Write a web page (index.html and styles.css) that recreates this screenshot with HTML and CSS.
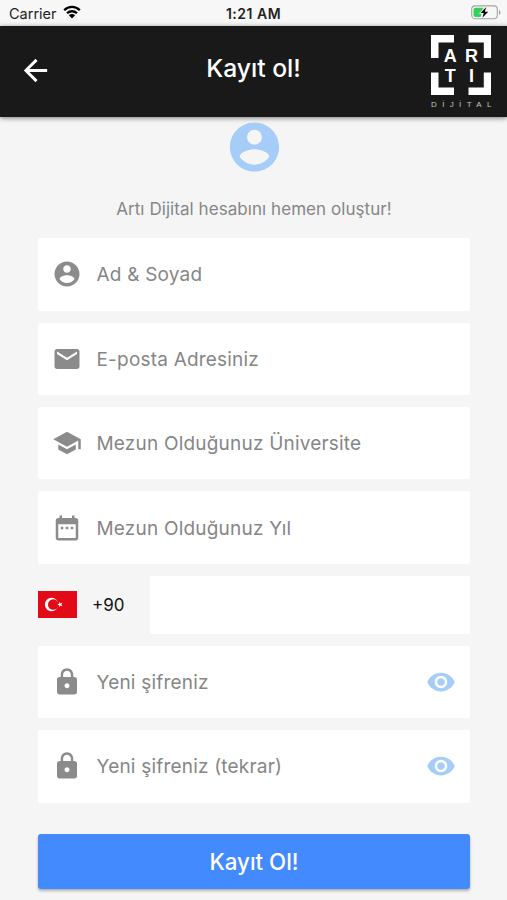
FILE: index.html
```html
<!DOCTYPE html>
<html lang="tr">
<head>
    <meta charset="UTF-8">
    <meta name="viewport" content="width=device-width, initial-scale=1.0">
    <title>Kayıt ol!</title>
    <link rel="stylesheet" href="styles.css">
</head>
<body>
    <div class="status-bar">
        <div class="carrier">
            <span>Carrier</span>
            <svg class="wifi" viewBox="0 0 18 14">
                <path d="M1.2 5.2a11 11 0 0 1 15.6 0M4 8.3a7.1 7.1 0 0 1 10 0" fill="none" stroke="#000" stroke-width="2.3"/>
                <path d="M5.8 10.3a4.6 4.6 0 0 1 6.4 0L9 13.6z"/>
            </svg>
        </div>
        <div class="time">1:21 AM</div>
        <svg class="battery" viewBox="0 0 30 15">
            <rect x="0.7" y="0.9" width="25.6" height="12.8" rx="3.4" fill="#f7f7f7" stroke="#a3a3a3" stroke-width="1.1"/>
            <path d="M4.5 2.7h8.3L9.2 8.3h1.6l-1.2 3.8H4.5a2 2 0 0 1-2-2V4.7a2 2 0 0 1 2-2z" fill="#35d05c"/>
            <path d="M28 5v4.8c2-.8 2-4 0-4.8z" fill="#a3a3a3"/>
            <path d="M15.2 2 9.6 8h3.2l-1.4 4.8L17.2 6.7h-3.4z" stroke="#f7f7f7" stroke-width="1.6" paint-order="stroke"/>
        </svg>
    </div>

    <header class="header">
        <a class="back" href="#" aria-label="Geri">
            <svg viewBox="0 0 24 24"><path d="M20 11H7.83l5.59-5.59L12 4l-8 8 8 8 1.41-1.41L7.83 13H20v-2z"/></svg>
        </a>
        <h1>Kayıt ol!</h1>
        <svg class="logo" viewBox="0 0 62 74">
            <path d="M0 0h23v7.5H7.5V23H0zM37.5 0H60v23h-7.2V7.5H37.5zM0 37.5h7.5v15H23V60H0zM52.8 37.5H60V60H37.5v-7.5h15.3z"/>
            <text class="logo-letter" x="19.2" y="27">A</text>
            <text class="logo-letter" x="40.6" y="27">R</text>
            <text class="logo-letter" x="19.2" y="46.5">T</text>
            <text class="logo-letter" x="40.6" y="46.5">I</text>
            <text class="logo-name" x="0" y="71.5" textLength="60.5">DİJİTAL</text>
        </svg>
    </header>

    <main class="container">
        <svg class="avatar" viewBox="0 0 24 24"><path d="M12 2C6.48 2 2 6.48 2 12s4.48 10 10 10 10-4.48 10-10S17.52 2 12 2zm0 3c1.66 0 3 1.34 3 3s-1.34 3-3 3-3-1.34-3-3 1.34-3 3-3zm0 14.2c-2.5 0-4.71-1.28-6-3.22.03-1.99 4-3.08 6-3.08 1.99 0 5.97 1.09 6 3.08-1.29 1.94-3.5 3.22-6 3.22z"/></svg>
        <p class="subtitle">Artı Dijital hesabını hemen oluştur!</p>

        <form class="register-form">
            <label class="field">
                <svg class="icon" viewBox="0 0 24 24"><path d="M12 2C6.48 2 2 6.48 2 12s4.48 10 10 10 10-4.48 10-10S17.52 2 12 2zm0 3c1.66 0 3 1.34 3 3s-1.34 3-3 3-3-1.34-3-3 1.34-3 3-3zm0 14.2c-2.5 0-4.71-1.28-6-3.22.03-1.99 4-3.08 6-3.08 1.99 0 5.97 1.09 6 3.08-1.29 1.94-3.5 3.22-6 3.22z"/></svg>
                <input type="text" name="name" placeholder="Ad &amp; Soyad">
            </label>

            <label class="field">
                <svg class="icon" viewBox="0 0 24 24"><path d="M20 4H4c-1.1 0-1.99.9-1.99 2L2 18c0 1.1.9 2 2 2h16c1.1 0 2-.9 2-2V6c0-1.1-.9-2-2-2zm0 4l-8 5-8-5V6l8 5 8-5v2z"/></svg>
                <input type="email" name="email" placeholder="E-posta Adresiniz">
            </label>

            <label class="field">
                <svg class="icon" viewBox="0 0 24 24"><path d="M5 13.18v4L12 21l7-3.82v-4L12 17l-7-3.82zM12 3L1 9l11 6 9-4.91V17h2V9L12 3z"/></svg>
                <input type="text" name="university" placeholder="Mezun Olduğunuz Üniversite">
            </label>

            <label class="field">
                <svg class="icon" viewBox="0 0 24 24"><path d="M9 11H7v2h2v-2zm4 0h-2v2h2v-2zm4 0h-2v2h2v-2zm2-7h-1V2h-2v2H8V2H6v2H5c-1.11 0-1.99.9-1.99 2L3 20c0 1.1.89 2 2 2h14c1.1 0 2-.9 2-2V6c0-1.1-.9-2-2-2zm0 16H5V9h14v11z"/></svg>
                <input type="text" name="year" placeholder="Mezun Olduğunuz Yıl">
            </label>

            <div class="phone">
                <svg class="flag" viewBox="0 0 39 27">
                    <rect width="39" height="27" fill="#e30a17"/>
                    <circle cx="13.6" cy="13.5" r="6.7" fill="#fff"/>
                    <circle cx="15.3" cy="13.5" r="5.3" fill="#e30a17"/>
                    <path d="M19.2 13.5l2-.7v-2.1l1.3 1.7 2-.7-1.2 1.8 1.2 1.8-2-.7-1.3 1.7v-2.1z" fill="#fff"/>
                </svg>
                <span class="code">+90</span>
                <input class="phone-input" type="tel" name="phone" aria-label="Telefon">
            </div>

            <label class="field">
                <svg class="icon" viewBox="0 0 24 24"><path d="M18 8h-1V6c0-2.76-2.24-5-5-5S7 3.24 7 6v2H6c-1.1 0-2 .9-2 2v10c0 1.1.9 2 2 2h12c1.1 0 2-.9 2-2V10c0-1.1-.9-2-2-2zm-6 9c-1.1 0-2-.9-2-2s.9-2 2-2 2 .9 2 2-.9 2-2 2zm3.1-9H8.9V6c0-1.71 1.39-3.1 3.1-3.1 1.71 0 3.1 1.39 3.1 3.1v2z"/></svg>
                <input type="password" name="password" placeholder="Yeni şifreniz">
                <svg class="icon eye" viewBox="0 0 24 24"><path d="M12 4.5C7 4.5 2.73 7.61 1 12c1.73 4.39 6 7.5 11 7.5s9.27-3.11 11-7.5c-1.73-4.39-6-7.5-11-7.5zM12 17c-2.76 0-5-2.24-5-5s2.24-5 5-5 5 2.24 5 5-2.24 5-5 5zm0-8c-1.66 0-3 1.34-3 3s1.34 3 3 3 3-1.34 3-3-1.34-3-3-3z"/></svg>
            </label>

            <label class="field">
                <svg class="icon" viewBox="0 0 24 24"><path d="M18 8h-1V6c0-2.76-2.24-5-5-5S7 3.24 7 6v2H6c-1.1 0-2 .9-2 2v10c0 1.1.9 2 2 2h12c1.1 0 2-.9 2-2V10c0-1.1-.9-2-2-2zm-6 9c-1.1 0-2-.9-2-2s.9-2 2-2 2 .9 2 2-.9 2-2 2zm3.1-9H8.9V6c0-1.71 1.39-3.1 3.1-3.1 1.71 0 3.1 1.39 3.1 3.1v2z"/></svg>
                <input type="password" name="password_confirm" placeholder="Yeni şifreniz (tekrar)">
                <svg class="icon eye" viewBox="0 0 24 24"><path d="M12 4.5C7 4.5 2.73 7.61 1 12c1.73 4.39 6 7.5 11 7.5s9.27-3.11 11-7.5c-1.73-4.39-6-7.5-11-7.5zM12 17c-2.76 0-5-2.24-5-5s2.24-5 5-5 5 2.24 5 5-2.24 5-5 5zm0-8c-1.66 0-3 1.34-3 3s1.34 3 3 3 3-1.34 3-3-1.34-3-3-3z"/></svg>
            </label>

            <button type="submit">Kayıt Ol!</button>
        </form>
    </main>
</body>
</html>
```
FILE: styles.css
```css
* {
    font-family: Inter, 'Liberation Sans', sans-serif;
    box-sizing: border-box;
}
body {
    margin: 0;
    height: 900px;
    overflow: hidden;
    background-color: #f5f5f5;
}
svg {
    display: block;
    flex-shrink: 0;
}

/* status bar */
.status-bar {
    display: grid;
    grid-template-columns: 1fr auto 1fr;
    align-items: center;
    height: 25.5px;
    padding: 1px 6px 0 9px;
    font-size: 14.5px;
    color: #222;
    background-color: #f7f7f7;
}
.carrier {
    display: flex;
    align-items: center;
    gap: 6px;
}
.wifi {
    width: 18px;
    height: 14px;
    margin-top: -2px;
}
.time {
    padding-right: 3px;
    font-weight: 600;
    font-size: 14px;
    letter-spacing: 0.5px;
}
.battery {
    width: 30px;
    height: 15px;
    margin-top: -1px;
    justify-self: end;
}

/* header */
.header {
    display: grid;
    grid-template-columns: 1fr auto 1fr;
    align-items: center;
    height: 91.5px;
    padding: 0 14px 0 18px;
    background-color: #191919;
    box-shadow: 0 1px 5px rgba(0, 0, 0, 0.5);
}
.back svg {
    width: 35px;
    height: 35px;
    margin-bottom: 2px;
    fill: #fff;
}
h1 {
    margin: 0 4px 7px 0;
    font-size: 24.7px;
    font-weight: 500;
    color: #fff;
}
.logo {
    width: 62px;
    height: 74px;
    margin-top: 1px;
    justify-self: end;
    fill: #fff;
}
.logo-letter {
    font-family: 'Liberation Sans', sans-serif;
    font-size: 18px;
    font-weight: bold;
    text-anchor: middle;
}
.logo-name {
    font-family: 'Liberation Sans', sans-serif;
    font-size: 8px;
    fill: #c4c4c4;
}

/* content */
.container {
    padding: 0 37px 0 38px;
}
.avatar {
    width: 59px;
    height: 60px;
    margin: 0 auto;
    fill: #a5cdf7;
}
.subtitle {
    margin: 21.4px 0 16.8px;
    font-size: 17px;
    line-height: 23px;
    letter-spacing: 0.06px;
    text-align: center;
    color: #868686;
}
.register-form {
    display: flex;
    flex-direction: column;
    gap: 12px;
}
.field {
    display: flex;
    align-items: center;
    height: 72.4px;
    padding: 0 14px;
    border-radius: 2px;
    background-color: #fff;
}
.icon {
    width: 30px;
    height: 30px;
    fill: #8b8b8b;
}
.eye {
    fill: #a5cdf7;
}
input {
    flex: 1;
    min-width: 0;
    padding: 0;
    border: none;
    outline: none;
    background: none;
    font-size: 19px;
    letter-spacing: 0.2px;
}
.field input {
    height: 100%;
    margin-left: 14.5px;
    padding-top: 1px;
}
input::placeholder {
    color: #868686;
    opacity: 1;
}
.phone {
    display: flex;
    align-items: center;
    height: 58px;
}
.flag {
    width: 39px;
    height: 27px;
}
.code {
    width: 58px;
    margin-left: 15px;
    font-size: 17px;
    color: #111;
}
.phone-input {
    height: 100%;
    background-color: #fff;
}
button {
    height: 55px;
    margin-top: 19px;
    border: none;
    border-radius: 3px;
    background-color: #448aff;
    color: #fff;
    font-size: 22.3px;
    font-weight: 500;
    box-shadow: 0 2px 3px rgba(0, 0, 0, 0.28);
    cursor: pointer;
}
```
